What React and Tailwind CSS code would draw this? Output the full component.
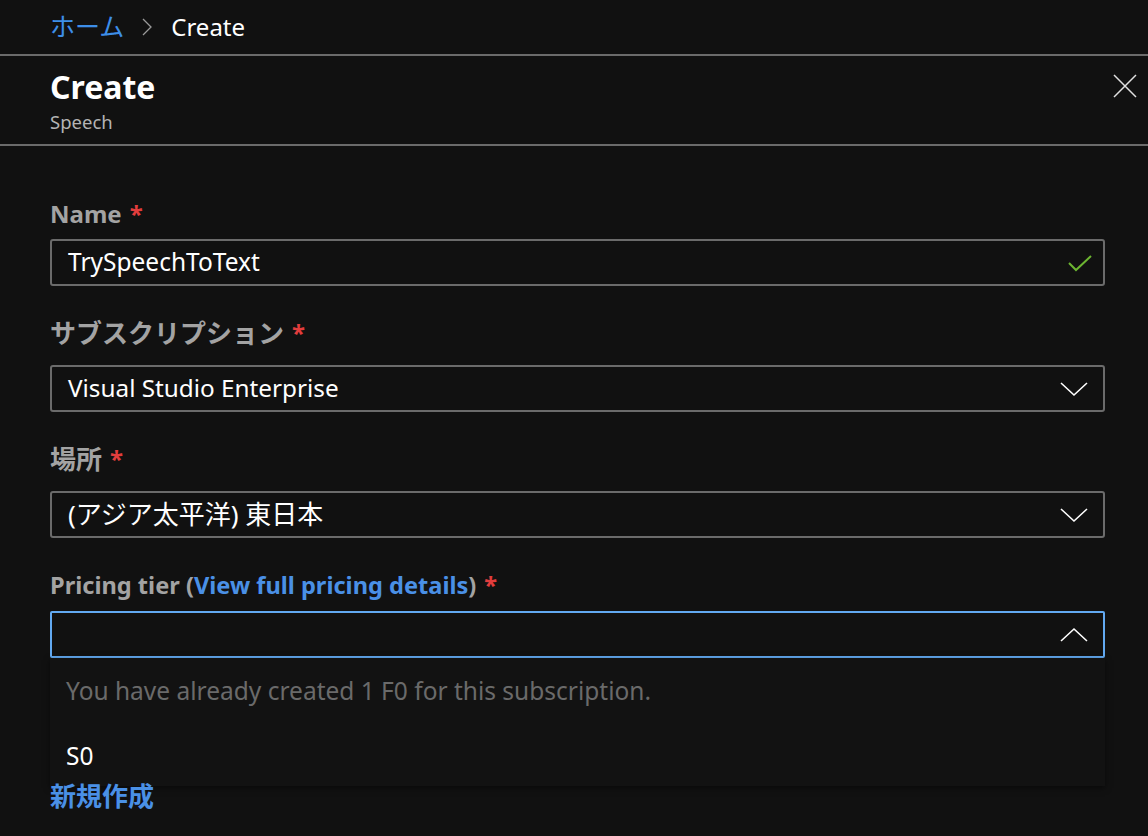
import React from "react";

const font = { fontFamily: '"Noto Sans", "Noto Sans CJK JP", sans-serif' };

function ChevronDown() {
  return (
    <svg width="28" height="16" viewBox="0 0 28 16" fill="none">
      <path d="M1 2 L14 14 L27 2" stroke="#ffffff" strokeWidth="1.6" />
    </svg>
  );
}
function ChevronUp() {
  return (
    <svg width="28" height="16" viewBox="0 0 28 16" fill="none">
      <path d="M1 14 L14 2 L27 14" stroke="#ffffff" strokeWidth="1.6" />
    </svg>
  );
}

function Label({ children, mb }) {
  return (
    <div className={`h-[30px] flex items-center font-bold text-[#a3a3a3] ${mb}`}>
      {children}
      <span className="text-[24px] text-[#e23d3d] ml-[8px]">*</span>
    </div>
  );
}

export default function App() {
  return (
    <div style={font} className="w-[1148px] h-[836px] bg-[#111111] overflow-hidden relative text-white">
      {/* breadcrumb */}
      <div className="h-[56px] flex items-center pl-[50px] border-b-2 border-[#6b6b6b]">
        <span className="text-[#3d8ee8] text-[25px]">ホーム</span>
        <svg width="10" height="18" viewBox="0 0 10 18" className="ml-[18px] mr-[19px]" fill="none">
          <path d="M1 1 L9 9 L1 17" stroke="#9a9a9a" strokeWidth="1.3" />
        </svg>
        <span className="text-white text-[24px]">Create</span>
      </div>
      {/* header */}
      <div className="h-[90px] border-b-2 border-[#6b6b6b] pl-[50px] pr-[11px] flex justify-between">
        <div className="flex flex-col pt-[9px]">
          <div className="text-[32px] font-bold leading-[44px] text-white">Create</div>
          <div className="text-[18.5px] leading-[24px] text-[#b4b4b4] mt-[1px]">Speech</div>
        </div>
        <svg width="24" height="24" viewBox="0 0 24 24" className="mt-[18px]" fill="none">
          <path d="M1 1 L23 23 M23 1 L1 23" stroke="#e0e0e0" strokeWidth="1.5" />
        </svg>
      </div>
      {/* form */}
      <div className="pl-[50px] pr-[43px] pt-[53px]">
        <Label mb="mb-[10px]">
          <span className="text-[24px]">Name</span>
        </Label>
        <div className="h-[47px] border-2 border-[#6b6b6b] rounded-[3px] flex items-center justify-between pl-[16px] pr-[11px] text-[24.5px]">
          <span>TrySpeechToText</span>
          <svg width="24" height="18" viewBox="0 0 24 18" fill="none">
            <path d="M1 9 L8 16 L23 2" stroke="#6cb531" strokeWidth="2" />
          </svg>
        </div>

        <div className="mt-[32px]">
          <Label mb="mb-[17px]">
            <span className="text-[26px]">サブスクリプション</span>
          </Label>
        </div>
        <div className="h-[47px] border-2 border-[#6b6b6b] rounded-[3px] flex items-center justify-between pl-[16px] pr-[15px] text-[24.3px]">
          <span>Visual Studio Enterprise</span>
          <ChevronDown />
        </div>

        <div className="mt-[32px]">
          <Label mb="mb-[17px]">
            <span className="text-[26px]">場所</span>
          </Label>
        </div>
        <div className="h-[47px] border-2 border-[#6b6b6b] rounded-[3px] flex items-center justify-between pl-[16px] pr-[15px]">
          <span className="text-[26px]">(アジア太平洋) 東日本</span>
          <ChevronDown />
        </div>

        <div className="mt-[33px]">
          <div className="h-[30px] flex items-center text-[23.6px] font-bold text-[#a3a3a3] mb-[10px]">
            Pricing tier (<span className="text-[#4a90e6]">View full pricing details</span>)
            <span className="text-[#e23d3d] ml-[8px]">*</span>
          </div>
        </div>
        <div className="relative">
          <div className="h-[47px] border-2 border-[#62a9f1] rounded-[2px] flex items-center justify-end pr-[15px]">
            <ChevronUp />
          </div>
          <div className="absolute left-0 right-0 top-full h-[128px] bg-[#121212] shadow-[0_2px_6px_rgba(0,0,0,0.5)] z-0 text-[24.5px]">
            <div className="h-[66px] flex items-center pl-[16px] text-[#6a6a6a]">
              You have already created 1 F0 for this subscription.
            </div>
            <div className="h-[64px] flex items-center pl-[16px] text-white">S0</div>
          </div>
        </div>
        <div className="relative z-10 mt-[123px] text-[26px] font-bold text-[#4a90e6] leading-[30px]">新規作成</div>
      </div>
    </div>
  );
}
